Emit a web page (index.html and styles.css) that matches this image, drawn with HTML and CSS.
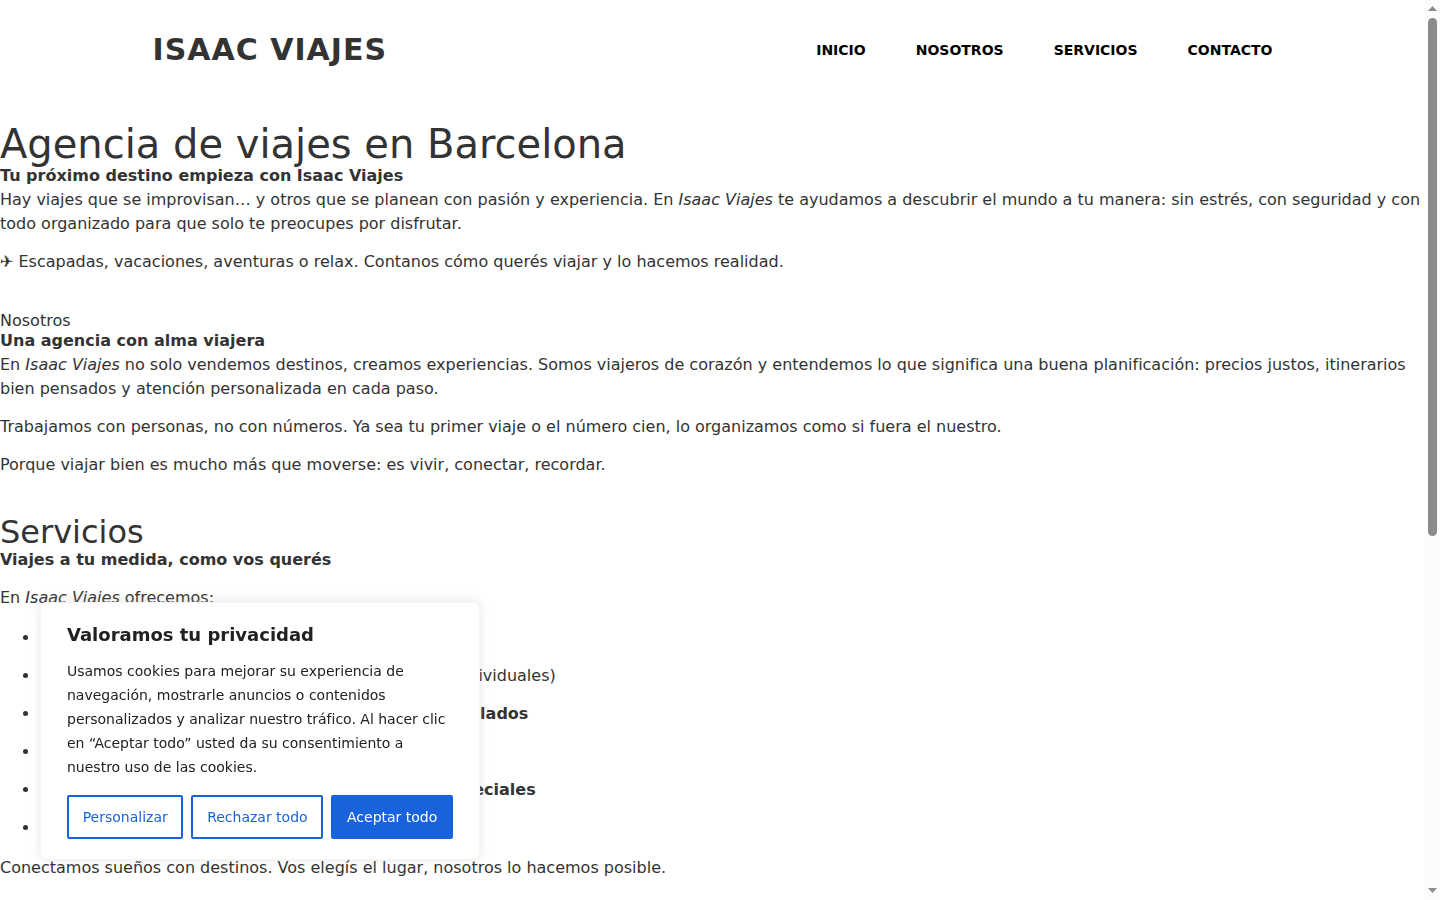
FILE: index.html
```html
<!DOCTYPE html>
<html lang="es">

<head>
    <meta charset="UTF-8">
    <meta name="viewport" content="width=device-width, initial-scale=1.0">
    <title>Isaac Viajes</title>
    <link rel="stylesheet" href="styles.css">
</head>

<body>
    <div class="page">
        <header class="site-header">
            <div class="header-inner">
                <a class="logo" href="#inicio">ISAAC VIAJES</a>
                <nav class="main-nav">
                    <a href="#inicio">INICIO</a>
                    <a href="#nosotros">NOSOTROS</a>
                    <a href="#servicios">SERVICIOS</a>
                    <a href="#contacto">CONTACTO</a>
                </nav>
            </div>
        </header>

        <main>
            <section class="section" id="inicio">
                <h1>Agencia de viajes en Barcelona</h1>
                <p><strong>Tu próximo destino empieza con Isaac Viajes</strong><br>
                    Hay viajes que se improvisan… y otros que se planean con pasión y experiencia. En <em>Isaac Viajes</em> te ayudamos a descubrir el mundo a tu manera: sin estrés, con seguridad y con todo organizado para que solo te preocupes por disfrutar.</p>
                <p>✈ Escapadas, vacaciones, aventuras o relax. Contanos cómo querés viajar y lo hacemos realidad.</p>
            </section>

            <section class="section" id="nosotros">
                <h6>Nosotros</h6>
                <p><strong>Una agencia con alma viajera</strong><br>
                    En <em>Isaac Viajes</em> no solo vendemos destinos, creamos experiencias. Somos viajeros de corazón y entendemos lo que significa una buena planificación: precios justos, itinerarios bien pensados y atención personalizada en cada paso.</p>
                <p>Trabajamos con personas, no con números. Ya sea tu primer viaje o el número cien, lo organizamos como si fuera el nuestro.</p>
                <p>Porque viajar bien es mucho más que moverse: es vivir, conectar, recordar.</p>
            </section>

            <section class="section" id="servicios">
                <h2>Servicios</h2>
                <p><strong>Viajes a tu medida, como vos querés</strong></p>
                <p>En <em>Isaac Viajes</em> ofrecemos:</p>
                <ul class="services">
                    <li><strong>Vuelos nacionales e internacionales</strong></li>
                    <li><strong>Paquetes turísticos y excursiones</strong> (familiares e individuales)</li>
                    <li><strong>Reservas de alojamientos, excursiones y los traslados</strong></li>
                    <li><strong>Seguros de viaje</strong></li>
                    <li><strong>Lunas de miel, aniversarios y los momentos especiales</strong></li>
                    <li><strong>Asesoramiento personalizado</strong></li>
                </ul>
                <p>Conectamos sueños con destinos. Vos elegís el lugar, nosotros lo hacemos posible.</p>
            </section>
        </main>
    </div>

    <div class="scrollbar" aria-hidden="true">
        <svg width="15" height="18" viewBox="0 0 15 18"><path d="M3 11h9L7.5 6z" /></svg>
        <div class="scrollbar-track">
            <div class="scrollbar-thumb"></div>
        </div>
        <svg width="15" height="18" viewBox="0 0 15 18"><path d="M3 6h9L7.5 11z" /></svg>
    </div>

    <div class="cookie-box" role="dialog" aria-labelledby="cookie-title">
        <p class="cookie-title" id="cookie-title">Valoramos tu privacidad</p>
        <p class="cookie-text">Usamos cookies para mejorar su experiencia de navegación, mostrarle anuncios o contenidos personalizados y analizar nuestro tráfico. Al hacer clic en “Aceptar todo” usted da su consentimiento a nuestro uso de las cookies.</p>
        <div class="cookie-buttons">
            <button class="cookie-btn" type="button">Personalizar</button>
            <button class="cookie-btn" type="button">Rechazar todo</button>
            <button class="cookie-btn cookie-btn-accept" type="button">Aceptar todo</button>
        </div>
    </div>
</body>

</html>
```
FILE: styles.css
```css
* {
    box-sizing: border-box;
}

body {
    display: flex;
    min-height: 100vh;
    margin: 0;
    background-color: #fff;
    color: #333;
    font-family: "DejaVu Sans", Verdana, sans-serif;
    font-size: 16px;
    line-height: 24px;
}

a {
    color: inherit;
    text-decoration: none;
}

.page {
    flex: 1;
    min-width: 0;
}

/* Header */
.site-header {
    padding: 32px 20px;
}

.header-inner {
    display: flex;
    flex-wrap: wrap;
    justify-content: space-between;
    align-items: center;
    max-width: 1120px;
    margin: 0 auto;
}

.logo {
    font-size: 30px;
    font-weight: bold;
    line-height: 35px;
    letter-spacing: 1px;
}

.main-nav {
    display: flex;
    flex-wrap: wrap;
    gap: 0 50px;
    color: #000;
    font-size: 14px;
    font-weight: bold;
}

/* Content */
.section {
    padding-top: 25px;
}

h1,
h2,
h6 {
    margin: 0;
    font-weight: normal;
    line-height: 1;
}

h1 {
    font-size: 40px;
}

h2 {
    font-size: 32px;
}

h6 {
    font-size: 16px;
}

p {
    margin: 0 0 14px;
}

.services {
    display: grid;
    gap: 14px;
    margin: 16px 0;
    padding-left: 40px;
}

/* Scrollbar */
.scrollbar {
    position: sticky;
    top: 0;
    display: flex;
    flex-direction: column;
    width: 15px;
    height: 100vh;
    background-color: #fcfcfc;
}

.scrollbar svg {
    display: block;
    fill: #8b8b8b;
}

.scrollbar-track {
    flex: 1;
    padding: 0 3px;
}

.scrollbar-thumb {
    height: 60%;
    border-radius: 5px;
    background-color: #8b8b8b;
}

/* Cookie notice */
.cookie-box {
    position: fixed;
    left: 40px;
    bottom: 40px;
    width: 440px;
    max-width: calc(100% - 80px);
    padding: 20px 26px;
    border: 1px solid #f4f4f4;
    border-radius: 6px;
    background-color: #fff;
    color: #212121;
    box-shadow: 0 -1px 10px 0 #acabab4d;
}

.cookie-title {
    margin: 0 0 12px;
    font-size: 18px;
    font-weight: bold;
}

.cookie-text {
    margin: 0 0 16px;
    font-size: 14px;
}

.cookie-buttons {
    display: flex;
    gap: 8px;
}

.cookie-btn {
    flex: auto;
    padding: 8px 0;
    border: 2px solid #1863dc;
    border-radius: 2px;
    background: transparent;
    color: #1863dc;
    font-family: inherit;
    font-size: 14px;
    line-height: 24px;
    white-space: nowrap;
    cursor: pointer;
}

.cookie-btn-accept {
    background-color: #1863dc;
    color: #fff;
}
```
